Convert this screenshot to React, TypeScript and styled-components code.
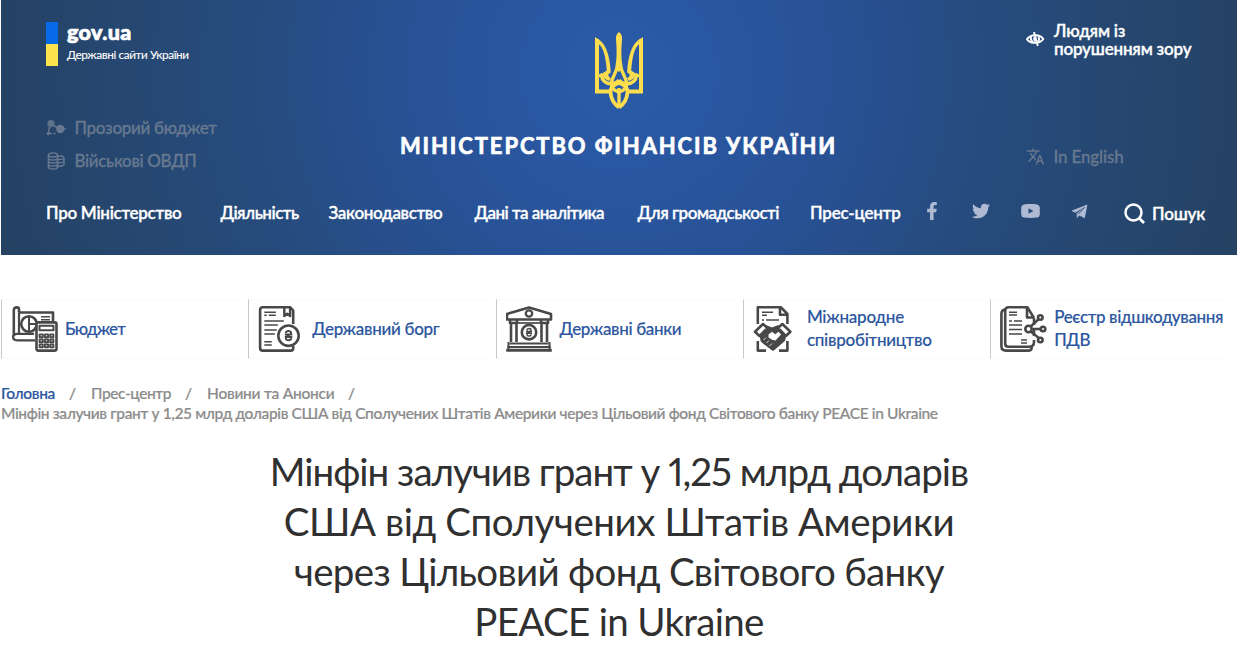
import React from 'react';
import styled, { createGlobalStyle } from 'styled-components';
import { FaFacebookF, FaTwitter } from 'react-icons/fa';
import { MdTranslate } from 'react-icons/md';

const Global = createGlobalStyle`
  *, *::before, *::after { box-sizing: border-box; }
  body { margin: 0; background: #fff; font-family: Lato, "Noto Sans", sans-serif; overflow: hidden; }
  svg { display: block; flex: none; }
`;

const Page = styled.div`
  width: 1238px;
  height: 655px;
  overflow: hidden;
  padding: 0 1px;
`;

const Header = styled.header`
  height: 255px;
  padding: 22px 0 0 45px;
  color: #fff;
  background: radial-gradient(circle 640px at 50% 28%, #2b5ba9 0%, #285297 32%, #264b7c 60%, #254263 100%);
`;

const HeaderTop = styled.div`
  display: grid;
  grid-template-columns: 355px 435px 190px 1fr;
  height: 168px;
`;

const Side = styled.div`
  display: flex;
  flex-direction: column;
`;

const Brand = styled.div`
  display: flex;
  gap: 9px;
  height: 44px;
`;

const Flag = styled.div`
  width: 12px;
  background: linear-gradient(#0669e8 50%, #ffe34d 50%);
`;

const BrandText = styled.div`
  display: flex;
  flex-direction: column;
`;

const BrandName = styled.span`
  font-size: 21.5px;
  line-height: 21px;
  height: 23px;
  font-weight: 900;
  -webkit-text-stroke: 0.7px #fff;
  letter-spacing: 0.4px;
`;

const BrandNote = styled.span`
  font-size: 11.8px;
  line-height: 20px;
  letter-spacing: -0.4px;
  -webkit-text-stroke: 0.1px #fff;
  white-space: nowrap;
`;

const FadedLinks = styled.div<{ $top: number }>`
  display: flex;
  flex-direction: column;
  margin-top: ${(p) => p.$top}px;
`;

const FadedLink = styled.a<{ $spacing?: number }>`
  display: flex;
  align-items: center;
  gap: 8.5px;
  height: 33px;
  font-size: 17px;
  font-weight: 500;
  letter-spacing: ${(p) => p.$spacing ?? 0}px;
  -webkit-text-stroke: 0.3px #67788f;
  color: #67788f;
  white-space: nowrap;
`;

const Emblem = styled.div`
  display: flex;
  flex-direction: column;
  align-items: center;
  padding-top: 10px;
`;

const Ministry = styled.h2`
  margin: 22px 0 0;
  font-size: 22px;
  line-height: 28px;
  font-weight: 700;
  letter-spacing: 1.9px;
  -webkit-text-stroke: 0.7px #fff;
  white-space: nowrap;
`;

const Access = styled.a`
  display: flex;
  gap: 9px;
  font-size: 17px;
  line-height: 18px;
  font-weight: 600;
  -webkit-text-stroke: 0.3px #fff;
  letter-spacing: -0.2px;
  white-space: nowrap;
`;

const Nav = styled.nav`
  display: grid;
  grid-template-columns: 174.5px 108px 146px 163px 172.5px 111.5px 49px 49.5px 49px 53px 1fr;
  align-items: center;
  height: 46px;
`;

const NavLink = styled.a<{ $spacing?: number }>`
  padding-bottom: 1px;
  font-size: 17px;
  font-weight: 600;
  letter-spacing: ${(p) => p.$spacing ?? 0}px;
  -webkit-text-stroke: 0.3px #fff;
  white-space: nowrap;
`;

const Social = styled.a`
  display: flex;
  justify-content: center;
  width: 20px;
  padding-bottom: 4px;
  color: #b0bbd3;
`;

const SearchLink = styled.a`
  display: flex;
  align-items: center;
  gap: 7px;
  padding-left: 2px;
  font-size: 17px;
  font-weight: 600;
  letter-spacing: -0.2px;
  -webkit-text-stroke: 0.3px #fff;
`;

const Tiles = styled.div`
  display: grid;
  grid-template-columns: repeat(5, 247.3px);
  margin-top: 44px;
`;

const Tile = styled.a<{ $spacing?: number }>`
  display: flex;
  align-items: center;
  gap: 6px;
  height: 60px;
  margin-right: 7px;
  padding-left: 9px;
  border-left: 1px solid #c9c9c9;
  border-top: 1px solid #fafafa;
  border-bottom: 1px solid #fafafa;
  color: #2c56a0;
  font-size: 17px;
  line-height: 23px;
  font-weight: 500;
  letter-spacing: ${(p) => p.$spacing ?? 0}px;
  -webkit-text-stroke: 0.15px #2c56a0;
  white-space: pre;
`;

const TileLabel = styled.span<{ $tall?: boolean }>`
  padding-bottom: ${(p) => (p.$tall ? 2 : 1)}px;
`;

const Crumbs = styled.div`
  display: grid;
  grid-template-columns: 68px 22px 94px 22px 141px 20px;
  margin-top: 24px;
  font-size: 15.5px;
  line-height: 20px;
  font-weight: 500;
  color: #8c8c8c;
  white-space: nowrap;
`;

const Crumb = styled.span<{ $active?: boolean; $spacing?: number }>`
  color: ${(p) => (p.$active ? '#2c56a0' : '#8c8c8c')};
  letter-spacing: ${(p) => p.$spacing ?? 0}px;
  -webkit-text-stroke: 0.2px currentColor;
`;

const CurrentCrumb = styled.div`
  font-size: 15.5px;
  line-height: 20px;
  font-weight: 500;
  letter-spacing: -0.37px;
  -webkit-text-stroke: 0.2px currentColor;
  color: #8c8c8c;
  white-space: nowrap;
`;

const Title = styled.h1`
  margin: 23px 0 0;
  font-size: 38.5px;
  line-height: 50px;
  font-weight: 400;
  font-variant-numeric: proportional-nums;
  color: #303030;
  text-align: center;
`;

const TitleLine = styled.span<{ $spacing: number }>`
  display: block;
  letter-spacing: ${(p) => p.$spacing}px;
  white-space: nowrap;
`;

const Trident = () => (
  <svg width="48" height="78" viewBox="0 0 48 78" fill="none" stroke="#fbdd4d" strokeWidth="4">
    {[false, true].map((flip) => (
      <g key={String(flip)} transform={flip ? 'translate(48 0) scale(-1 1)' : undefined}>
        <path d="M2 7V59.4H16" />
        <path d="M0 5.3C8.5 9 14.5 18 15.8 40.5L13.6 42C13 43.5 13.4 44.6 16 46.5L14 49C9.5 47.5 7.5 44.5 8 41L11.8 38.5C10.5 23 8.5 16.5 3.8 12L0 12Z" fill="#fbdd4d" stroke="none" />
        <path d="M2 45L8 42" strokeWidth="2.8" />
        <path d="M6.5 43C7 48.5 11 51.8 16 51.8C20 51.5 22.5 50 24 48" strokeWidth="3.6" />
        <path d="M22.5 34C21 41 17 46 16.3 51C16 56 20 59 24 60" strokeWidth="3.4" />
        <path d="M24 51C18 53 15.5 56 15.5 60C15.8 66 19 72 24 75.4" strokeWidth="3.8" />
      </g>
    ))}
    <path d="M24 0C26.4 1.6 27.4 4.5 27 8C26.2 16 26 26 27.4 33C28 36 26 38 24 40C22 38 20 36 20.6 33C22 26 21.8 16 21 8C20.6 4.5 21.6 1.6 24 0Z" fill="#fbdd4d" stroke="none" />
    <path d="M24 56V75" strokeWidth="3.4" />
  </svg>
);

const NetworkIcon = () => (
  <svg width="20" height="18" viewBox="0 0 20 18" fill="currentColor">
    <circle cx="5" cy="4.5" r="3.6" opacity=".9" />
    <circle cx="14.3" cy="10" r="4.2" />
    <circle cx="2.4" cy="14.5" r="1.8" />
    <path d="M2.6 8L2 14H3L4.4 8zM4 13.8h2v1.4H4zM7.4 13.8h2v1.4h-2zM8 6l4 2-1 1.2-3.6-1.8zM18 9.2h2v1.2h-2z" />
  </svg>
);

const CoinsIcon = () => (
  <svg width="20" height="18" viewBox="0 0 20 18" fill="none" stroke="currentColor" strokeWidth="1.5">
    <ellipse cx="7" cy="3" rx="4.6" ry="1.9" />
    <path d="M2.4 3v12c0 1.1 2 2 4.6 2s4.6-.9 4.6-2V3M2.4 6c0 1.2 2 2 4.6 2s4.6-.8 4.6-2M2.4 9c0 1.2 2 2 4.6 2s4.6-.8 4.6-2M2.4 12c0 1.2 2 2 4.6 2s4.6-.8 4.6-2M11.6 3.8c3.6-.2 6.4.6 6.4 1.9v6.6c0 1.2-2.4 2.1-6.4 2M18 6c-.2 1.2-2.6 1.7-6.4 1.6M18 9c-.2 1.2-2.6 1.9-6.4 1.8" />
  </svg>
);

const BlindIcon = () => (
  <svg width="19" height="34" viewBox="0 -10 19 34" fill="none" stroke="#fff" strokeWidth="2">
    <path d="M1 7.3C4.5 2.2 13.5 1.8 17.3 7C13.8 12 5 12.2 1 7.3Z" />
    <path d="M5 4.5C4.4 7 5.4 9 7.4 10.2M8 5.5C7.9 7.5 8.6 8.4 9.6 9.4" />
    <path d="M8 0L11.8 14" strokeWidth="1.9" />
    <path d="M12.2 5C13.6 6.2 13.2 8.6 11.8 9.4" />
  </svg>
);

const YoutubeIcon = () => (
  <svg width="19" height="14" viewBox="0 0 19 14" fill="currentColor">
    <path fillRule="evenodd" d="M3 .4C7 0 12 0 16 .4Q18.6.7 18.8 3.5V10.5Q18.6 13.3 16 13.6C12 14 7 14 3 13.6Q.4 13.3.2 10.5V3.5Q.4.7 3 .4ZM7.5 4.2V9.8L12.4 7Z" />
  </svg>
);

const PlaneIcon = () => (
  <svg width="17" height="15" viewBox="0 0 17 15" fill="currentColor">
    <path d="M16.4.4L.4 6.7L4.3 8.8L13.2 3.3L5.7 9.6L5.9 14.2L8.2 11.5L13.8 14.2Z" />
    <path d="M13.8 3L7.2 10.3" stroke="#284d80" strokeWidth=".9" />
  </svg>
);

const SearchIcon = () => (
  <svg width="21" height="21" viewBox="0 0 21 21" fill="none" stroke="#fff" strokeWidth="2.5">
    <circle cx="9.5" cy="9.5" r="8" />
    <path d="M15.3 15.3L20 20" strokeWidth="2.8" />
  </svg>
);

const TileSvg = ({ children }: { children: React.ReactNode }) => (
  <svg width="48" height="46" viewBox="0 0 48 46" fill="none" stroke="#484848" strokeWidth="2.6" strokeLinejoin="round">
    {children}
  </svg>
);

const BudgetIcon = () => (
  <TileSvg>
    <path d="M8 6.5H42V15M8 6.5V3.5Q8 1.4 5.8 1.4Q3.4 1.4 2.8 3.6V30" />
    <path d="M8 6.5V27.8M24 34.3H6.2Q2 34.3 2 30.8Q2.6 27.8 6 27.8H23" strokeWidth="2.2" />
    <circle cx="18" cy="18" r="7.8" />
    <path d="M18 10V26M18 18H25.5" strokeWidth="2" />
    <path d="M30 10.8H39M30 13.8H39" strokeWidth="1.4" />
    <rect x="25.5" y="16.4" width="20" height="28.2" rx="1.8" fill="#fff" />
    <rect x="28.5" y="19.8" width="14" height="4.4" strokeWidth="2" />
    {[0, 1, 2].map((r) => [0, 1, 2].map((c) => (
      <rect key={`${r}-${c}`} x={28.6 + c * 5.3} y={28.4 + r * 5} width="3.2" height="2.8" strokeWidth="1.9" />
    )))}
  </TileSvg>
);

const DebtIcon = () => (
  <TileSvg>
    <g transform="translate(.8 0)">
      <path d="M34.4 18V4.5L31.5 1.3H4Q1.3 1.3 1.3 4V42Q1.3 44.6 4 44.6H32Q34.4 44.6 34.4 42V40" />
      <path d="M25.5 2V10L28.4 7.7L31.3 10V2" strokeWidth="2.4" />
      <path d="M5.5 6.2H17M5.5 9.3H8M10 9.3H17M5.5 15H25M5.5 19H19M5.5 24H18M5.5 28H16M5.5 35.8H13M5.5 39H13" strokeWidth="1.5" />
      <circle cx="29.7" cy="29.7" r="10.2" fill="#fff" />
      <path d="M27 27C27.3 24.4 32.3 24.2 32.3 27C32.3 29.7 27 29.2 27 32.2C27 35 32 34.8 32.6 32.3M26 28.5H33.5M26 31H33.5" strokeWidth="2" />
    </g>
  </TileSvg>
);

const BankIcon = () => (
  <TileSvg>
    <g transform="translate(-1 0)">
      <path d="M2 8L24 1.5L46 8V13.5H2Z" />
      <circle cx="24" cy="7.5" r="3.2" strokeWidth="2.3" />
      <path d="M5 14V17H12V14M36 14V17H43V14M6 18V36M11.5 18V36M36.5 18V36M42 18V36" strokeWidth="2.6" />
      <path d="M12.5 17H35.5" strokeWidth="1.7" />
      <circle cx="24" cy="26.2" r="7.2" />
      <path d="M22 24.4C22.2 21.8 26 22 26 24.2C26 26.6 22 25.8 22 28.3C22 30.8 26 30.4 26.2 28.4M21 25.4H27M21 27.3H27" strokeWidth="1.5" />
      <path d="M4.5 37.5H43.5M2.3 41H45.7" strokeWidth="1.8" />
      <path d="M1.2 44.2H46.8" strokeWidth="3" />
      <path d="M3.5 36V44M44.5 36V44" strokeWidth="2" />
    </g>
  </TileSvg>
);

const HandshakeIcon = () => (
  <TileSvg>
    <path d="M4.8 18V1.3H28L34.4 8V18M27 1.5V8.8H34.2M4.8 35V44.6H13M26 44.6H34.4V35" />
    <path d="M9 6.2H20M9 9.2H14M9 14H11M13 14H26" strokeWidth="1.6" />
    <path d="M7 26L9 35L20 43.5L31 34L32.5 26L25 20.5L19 23L13 20.5Z" fill="#484848" />
    <path d="M15.5 28.5L19 25.8L22.3 28.2L25.5 25.8L28 28.5L22.5 34.5L19.5 34L15.5 31.5Z" fill="#fff" stroke="none" />
    <path d="M2 25.8L10 18L14.5 22L6.5 30ZM37.4 25.8L29.4 18L24.9 22L32.9 30Z" fill="#fff" />
    <path d="M10.5 34L13 31.5M13.5 37L16 34.5M16.5 40L19 37.5" stroke="#fff" strokeWidth=".8" />
  </TileSvg>
);

const RegistryIcon = () => (
  <TileSvg>
    <path d="M5 3.5Q1.4 4 1.4 8V40Q1.4 44.6 6 44.6H29Q31.7 44.6 31.7 41" />
    <path d="M34 12L27.5 1.3H8.5Q5.2 1.3 5.2 4.5V37.5Q5.2 40.8 8.5 40.8H29Q34 40.8 34 36V34M34 30V23M34 19V12M27 2V11.5H33.5" />
    <path d="M9 6.2H17M9 9H17M9 15H12M14 15H22M9 19H22M9 23.5H22M9 28H22M21 34H27M21 37H27" strokeWidth="1.5" />
    <path d="M29 22L40 12M29 23H42M29 24L40 33" strokeWidth="2.4" />
    <circle cx="28.5" cy="23" r="3.2" fill="#fff" />
    <circle cx="40.3" cy="11.5" r="2.3" fill="#fff" />
    <circle cx="43" cy="23" r="2.3" fill="#fff" />
    <circle cx="40.3" cy="34" r="2.3" fill="#fff" />
  </TileSvg>
);

export default function App() {
  return (
    <Page>
      <Global />
      <Header>
        <HeaderTop>
          <Side>
            <Brand>
              <Flag />
              <BrandText>
                <BrandName>gov.ua</BrandName>
                <BrandNote>Державні сайти України</BrandNote>
              </BrandText>
            </Brand>
            <FadedLinks $top={45}>
              <FadedLink $spacing={-0.3}><NetworkIcon />Прозорий бюджет</FadedLink>
              <FadedLink $spacing={-0.35}><CoinsIcon />Військові ОВДП</FadedLink>
            </FadedLinks>
          </Side>
          <Emblem>
            <Trident />
            <Ministry>МІНІСТЕРСТВО ФІНАНСІВ УКРАЇНИ</Ministry>
          </Emblem>
          <div />
          <Side>
            <Access>
              <BlindIcon />
              <span>Людям із<br />порушенням зору</span>
            </Access>
            <FadedLinks $top={82}>
              <FadedLink $spacing={-0.15}><MdTranslate size={19} />In English</FadedLink>
            </FadedLinks>
          </Side>
        </HeaderTop>
        <Nav>
          <NavLink $spacing={-0.28}>Про Міністерство</NavLink>
          <NavLink $spacing={-0.5}>Діяльність</NavLink>
          <NavLink $spacing={-0.35}>Законодавство</NavLink>
          <NavLink $spacing={-0.53}>Дані та аналітика</NavLink>
          <NavLink $spacing={-0.48}>Для громадськості</NavLink>
          <NavLink $spacing={-0.2}>Прес-центр</NavLink>
          <Social><FaFacebookF size={18} /></Social>
          <Social><FaTwitter size={18} /></Social>
          <Social><YoutubeIcon /></Social>
          <Social><PlaneIcon /></Social>
          <SearchLink><SearchIcon />Пошук</SearchLink>
        </Nav>
      </Header>
      <Tiles>
        <Tile $spacing={-0.8}><BudgetIcon /><TileLabel>Бюджет</TileLabel></Tile>
        <Tile $spacing={-0.3}><DebtIcon /><TileLabel>Державний борг</TileLabel></Tile>
        <Tile $spacing={-0.35}><BankIcon /><TileLabel>Державні банки</TileLabel></Tile>
        <Tile $spacing={-0.25}><HandshakeIcon /><TileLabel $tall>{'Міжнародне\nспівробітництво'}</TileLabel></Tile>
        <Tile $spacing={-0.37}><RegistryIcon /><TileLabel $tall>{'Реєстр відшкодування\nПДВ'}</TileLabel></Tile>
      </Tiles>
      <Crumbs>
        <Crumb $active $spacing={-0.35}>Головна</Crumb>
        <Crumb>/</Crumb>
        <Crumb $spacing={-0.4}>Прес-центр</Crumb>
        <Crumb>/</Crumb>
        <Crumb $spacing={-0.25}>Новини та Анонси</Crumb>
        <Crumb>/</Crumb>
      </Crumbs>
      <CurrentCrumb>
        Мінфін залучив грант у 1,25 млрд доларів США від Сполучених Штатів Америки через Цільовий фонд Світового банку PEACE in Ukraine
      </CurrentCrumb>
      <Title>
        <TitleLine $spacing={-1}>Мінфін залучив грант у 1,25 млрд доларів</TitleLine>
        <TitleLine $spacing={-0.43}>США від Сполучених Штатів Америки</TitleLine>
        <TitleLine $spacing={-0.68}>через Цільовий фонд Світового банку</TitleLine>
        <TitleLine $spacing={-0.7}>PEACE in Ukraine</TitleLine>
      </Title>
    </Page>
  );
}
